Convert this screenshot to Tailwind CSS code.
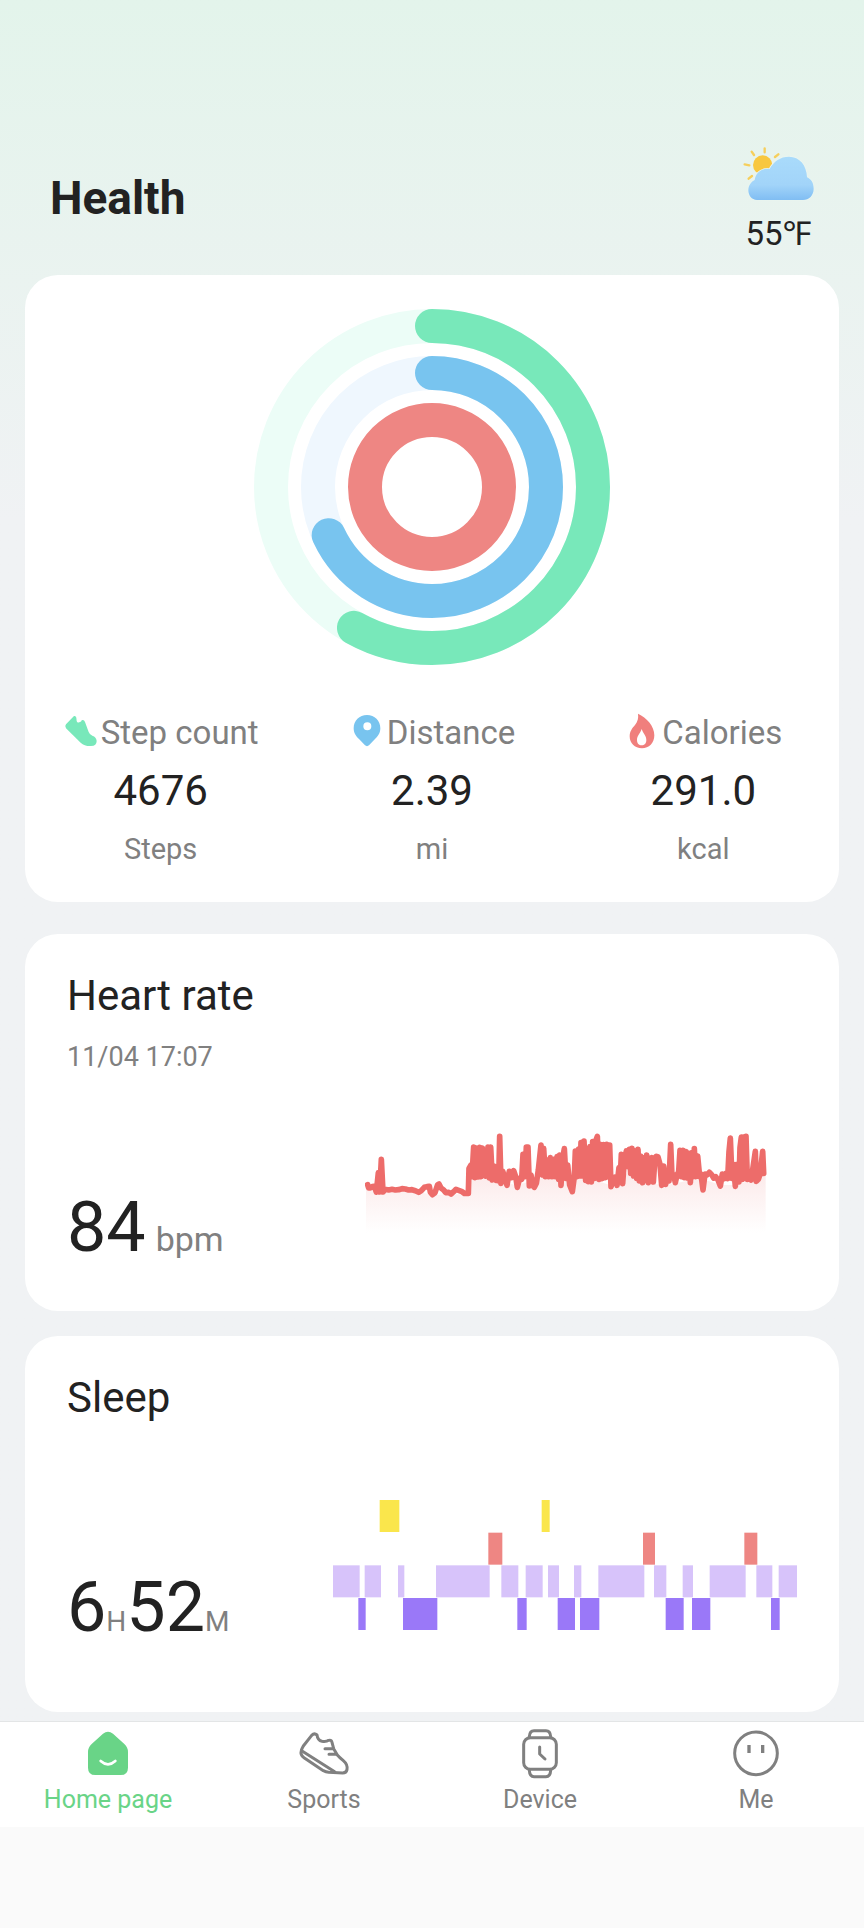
<!DOCTYPE html>
<html lang="en">
<head>
    <meta charset="UTF-8">
    <meta name="viewport" content="width=device-width, initial-scale=1.0">
    <title>Health</title>
    <!-- Tailwind CSS via CDN -->
    <script src="https://cdn.jsdelivr.net/npm/@tailwindcss/browser@4"></script>
</head>
<body class="bg-[#fafafa] min-h-screen font-['Roboto','Noto_Sans',sans-serif] text-[#222222]">
    <div class="bg-[#f0f2f4] bg-linear-to-b from-[#e3f4eb] to-[#f0f2f4] to-[520px] pb-[9px]">
        <header class="flex items-center justify-between pl-[50px] pr-12 pt-[145px] pb-[21px]">
            <h1 class="pb-1 text-[46px] leading-[56px] font-bold">Health</h1>
            <div class="flex flex-col items-center gap-3">
                <svg class="w-[75px] h-[57px]" viewBox="60 45 225 171" aria-hidden="true">
                    <defs>
                        <linearGradient id="cloud" x1="0" y1="0" x2="0" y2="1">
                            <stop offset="0" stop-color="#a9dbfb"/>
                            <stop offset="0.65" stop-color="#a2d4f9"/>
                            <stop offset="1" stop-color="#80bdf3"/>
                        </linearGradient>
                    </defs>
                    <g stroke="#f6cf5c" stroke-width="7" stroke-linecap="round">
                        <path d="M131 55v12M92 65l7 10M172 73l-10 8M71 103l14 3M83 146l10-8"/>
                    </g>
                    <circle cx="125" cy="105" r="29" fill="#f8c73f"/>
                    <path d="M108 210C92 210 82 196 82 181C82 166 91 155 101 150C104 128 122 114 146 117C158 94 178 80 204 80C236 80 257 106 258 142C270 147 278 158 278 176C278 196 264 210 246 210Z" fill="url(#cloud)" stroke="#e9f5f0" stroke-width="5" paint-order="stroke"/>
                </svg>
                <p class="text-[33px] leading-10">55℉</p>
            </div>
        </header>

        <main class="px-[25px]">
            <!-- Activity -->
            <section class="bg-white rounded-[33px] pt-[34px] pb-[35px]">
                <svg class="mx-auto w-[356px] h-[356px]" viewBox="0 0 356 356" role="img" aria-label="Daily activity">
                    <g transform="rotate(-90 178 178)" fill="none" stroke-width="34" stroke-linecap="round">
                        <circle cx="178" cy="178" r="161" stroke="#ecfdf7"/>
                        <circle cx="178" cy="178" r="161" stroke="#78e8ba" pathLength="360" stroke-dasharray="209 360"/>
                        <circle cx="178" cy="178" r="114" stroke="#eff7fe"/>
                        <circle cx="178" cy="178" r="114" stroke="#78c4ef" pathLength="360" stroke-dasharray="245 360"/>
                        <circle cx="178" cy="178" r="67" stroke="#ee8683"/>
                    </g>
                </svg>
                <div class="grid grid-cols-3 mt-12 text-center text-[#808080]">
                    <div>
                        <h2 class="flex justify-center gap-[2px] text-[33px] leading-10">
                            <svg class="w-9 h-10" viewBox="98 69 108 120" aria-hidden="true">
                                <path d="M131 78Q137 77 138 83L139 93Q140 99 147 97Q154 95 154 91Q161 88 164 96L175 126Q178 134 186 137Q198 141 199 153Q199 168 182 168Q163 169 151 158L107 115Q102 109 107 103Z" fill="#78e8ba"/>
                            </svg>
                            Step count
                        </h2>
                        <p class="mt-[14px] text-[42px] leading-12 text-[#222222]">4676</p>
                        <p class="mt-4 text-[29px] leading-9">Steps</p>
                    </div>
                    <div>
                        <h2 class="flex justify-center gap-[2px] text-[33px] leading-10">
                            <svg class="w-9 h-10" viewBox="954 69 108 120" aria-hidden="true">
                                <path fill-rule="evenodd" d="M1008 75C1031 75 1048 92 1048 115C1048 130 1040 140 1032 147L1014 166Q1008 171 1002 166L984 147C976 140 968 130 968 115C968 92 985 75 1008 75ZM1009 97a12 12 0 1 0 0 24a12 12 0 1 0 0-24Z" fill="#78c4ef"/>
                            </svg>
                            Distance
                        </h2>
                        <p class="mt-[14px] text-[42px] leading-12 text-[#222222]">2.39</p>
                        <p class="mt-4 text-[29px] leading-9">mi</p>
                    </div>
                    <div>
                        <h2 class="flex justify-center gap-[2px] text-[33px] leading-10">
                            <svg class="w-9 h-10" viewBox="582 69 108 120" aria-hidden="true">
                                <path fill-rule="evenodd" d="M624 71C650 83 673 108 673 136C673 159 657 175 636 175C614 175 599 159 599 139C599 124 607 114 615 105C623 95 626 84 624 71ZM635 117C631 130 621 137 621 150C621 160 627 166 635 166C643 166 649 160 649 150C649 137 639 130 635 117Z" fill="#f07f7d"/>
                            </svg>
                            Calories
                        </h2>
                        <p class="mt-[14px] text-[42px] leading-12 text-[#222222]">291.0</p>
                        <p class="mt-4 text-[29px] leading-9">kcal</p>
                    </div>
                </div>
            </section>

            <!-- Heart rate -->
            <section class="mt-8 bg-white rounded-[33px] px-[42px] pt-[38px] pb-[44px]">
                <h2 class="text-[42px] leading-12">Heart rate</h2>
                <p class="mt-[21px] text-[27px] leading-8 text-[#808080]">11/04 17:07</p>
                <div class="mt-[57px] flex items-end justify-between">
                    <p class="flex items-baseline gap-[10px]">
                        <span class="text-[70px] leading-20">84</span>
                        <span class="text-[34px] leading-10 text-[#808080]">bpm</span>
                    </p>
                    <svg class="mr-[30px] mb-8 w-[402px] h-[105px]" viewBox="44 60 1206 315" role="img" aria-label="Heart rate today">
                        <defs>
                            <linearGradient id="pulse" x1="0" y1="200" x2="0" y2="368" gradientUnits="userSpaceOnUse">
                                <stop offset="0" stop-color="#fcebeb"/>
                                <stop offset="1" stop-color="#ffffff"/>
                            </linearGradient>
                        </defs>
                        <path d="M47 235L100 245L200 245L250 255L356 252L364 205L400 200L440 215L500 225L590 200L640 205L670 235L680 195L780 225L830 190L880 220L950 225L1050 205L1110 225L1160 225L1246 195V370H47Z" fill="url(#pulse)"/>
                        <polyline fill="none" stroke="#ed6c6a" stroke-width="17" stroke-linejoin="round" stroke-linecap="round" points="52,224 55,234 60,234 66,230 72,229 78,246 84,188 88,246 93,148 98,246 104,238 115,240 125,238 135,240 145,239 155,236 165,237 175,240 185,239 195,242 205,247 213,242 222,232 230,230 237,229 240,246 246,254 254,248 262,224 266,222 272,234 280,240 286,248 295,247 302,252 310,245 317,238 325,241 335,245 342,250 354,250 356,175 362,165 365,200 370,111 374,203 378,114 383,201 388,112 392,200 396,114 400,190 405,198 410,165 413,111 417,204 421,111 426,210 431,168 437,211 441,168 445,213 448,79 452,220 457,184 463,200 470,226 477,184 484,203 490,182 496,200 501,232 508,205 514,208 518,133 524,200 528,111 533,111 537,228 542,195 547,225 552,232 558,220 564,180 572,105 577,195 580,115 585,200 590,150 595,200 600,143 605,200 610,148 615,200 620,140 625,208 628,135 632,226 637,145 642,116 647,205 652,165 658,225 666,245 672,200 675,123 680,200 685,117 689,198 692,98 697,198 701,93 706,211 710,117 714,215 719,110 723,216 727,95 732,205 736,93 741,79 746,208 750,103 755,206 760,104 765,203 769,103 773,200 778,105 782,230 788,210 794,202 800,226 806,173 810,200 813,133 817,221 822,150 828,123 833,170 837,118 841,190 845,115 850,198 854,123 859,205 863,118 867,213 871,138 877,218 882,143 886,210 889,135 894,218 899,200 904,143 909,216 914,143 918,139 923,141 929,163 934,226 940,168 946,223 951,188 956,213 961,103 965,200 970,194 975,218 980,195 985,185 989,121 993,200 998,121 1002,203 1007,125 1011,204 1016,130 1020,218 1025,128 1029,200 1032,116 1036,200 1042,138 1048,200 1052,192 1058,240 1064,192 1070,195 1077,187 1084,194 1090,204 1096,200 1103,210 1110,228 1116,192 1122,206 1127,190 1132,206 1136,125 1140,84 1145,205 1149,163 1155,229 1160,163 1166,216 1169,113 1173,81 1176,208 1180,81 1184,190 1187,79 1191,208 1197,194 1202,210 1208,172 1215,124 1218,214 1224,208 1230,190 1237,124 1240,190"/>
                    </svg>
                </div>
            </section>

            <!-- Sleep -->
            <section class="mt-[25px] bg-white rounded-[33px] px-[42px] pt-[38px] pb-[65px]">
                <h2 class="text-[42px] leading-12">Sleep</h2>
                <div class="mt-[78px] flex items-end justify-between">
                    <p class="flex items-baseline">
                        <span class="text-[70px] leading-20">6</span>
                        <span class="text-[28px] leading-8 text-[#808080]">H</span>
                        <span class="text-[70px] leading-20">52</span>
                        <span class="text-[28px] leading-8 text-[#808080]">M</span>
                    </p>
                    <svg class="mb-[17px] w-[464px] h-[130px]" viewBox="40 60 1392 390" role="img" aria-label="Sleep stages">
                        <!-- awake -->
                        <g fill="#fae64c">
                            <rect x="180" y="60" width="59" height="96"/>
                            <rect x="666" y="60" width="24" height="96"/>
                        </g>
                        <!-- rem -->
                        <g fill="#ee8683">
                            <rect x="506" y="158" width="42" height="96"/>
                            <rect x="970" y="158" width="36" height="96"/>
                            <rect x="1274" y="158" width="39" height="96"/>
                        </g>
                        <!-- light -->
                        <g fill="#d7c3fa">
                            <rect x="40" y="256" width="80" height="96"/>
                            <rect x="135" y="256" width="49" height="96"/>
                            <rect x="235" y="256" width="19" height="96"/>
                            <rect x="349" y="256" width="161" height="96"/>
                            <rect x="545" y="256" width="51" height="96"/>
                            <rect x="618" y="256" width="51" height="96"/>
                            <rect x="685" y="256" width="33" height="96"/>
                            <rect x="763" y="256" width="22" height="96"/>
                            <rect x="836" y="256" width="138" height="96"/>
                            <rect x="1003" y="256" width="37" height="96"/>
                            <rect x="1089" y="256" width="31" height="96"/>
                            <rect x="1170" y="256" width="108" height="96"/>
                            <rect x="1310" y="256" width="48" height="96"/>
                            <rect x="1377" y="256" width="55" height="96"/>
                        </g>
                        <!-- deep -->
                        <g fill="#9a78f8">
                            <rect x="116" y="354" width="22" height="96"/>
                            <rect x="250" y="354" width="103" height="96"/>
                            <rect x="593" y="354" width="28" height="96"/>
                            <rect x="714" y="354" width="52" height="96"/>
                            <rect x="781" y="354" width="58" height="96"/>
                            <rect x="1038" y="354" width="54" height="96"/>
                            <rect x="1117" y="354" width="55" height="96"/>
                            <rect x="1354" y="354" width="26" height="96"/>
                        </g>
                    </svg>
                </div>
            </section>
        </main>
    </div>

    <nav class="grid grid-cols-4 border-t border-[#e3e5e6] bg-white pt-[6px] pb-[11px] text-[25px] leading-8 text-[#808080]">
        <a href="#" class="flex flex-col items-center gap-1 text-[#69d487]" aria-current="page">
            <svg class="w-14 h-[52px]" viewBox="240 84 168 156" aria-hidden="true">
                <path d="M309 101Q324 90 339 101L373 132Q384 142 384 156V203Q384 225 362 225H286Q264 225 264 203V156Q264 142 275 132Z" fill="#69d487"/>
                <path d="M302 183Q324 203 346 183" fill="none" stroke="#fff" stroke-width="8" stroke-linecap="round"/>
            </svg>
            Home page
        </a>
        <a href="#" class="flex flex-col items-center gap-1">
            <svg class="w-14 h-[52px]" viewBox="888 84 168 156" fill="none" stroke="#808080" stroke-width="9" stroke-linecap="round" stroke-linejoin="round" aria-hidden="true">
                <path d="M935 106Q943 98 951 105Q953 121 966 124Q979 126 986 121Q994 119 996 127L1001 146L1012 165Q1018 172 1030 182Q1044 194 1041 209Q1039 219 1028 219L986 217Q978 216 970 212L912 173Q900 165 904 151Q905 147 910 138Z"/>
                <path d="M905 152L1004 215"/>
                <path d="M975 146H1000M987 163H1010"/>
            </svg>
            Sports
        </a>
        <a href="#" class="flex flex-col items-center gap-1">
            <svg class="w-14 h-[52px]" viewBox="240 84 168 156" fill="none" stroke="#808080" stroke-width="9" stroke-linecap="round" stroke-linejoin="round" aria-hidden="true">
                <rect x="275" y="113" width="98" height="95" rx="20"/>
                <path d="M292 110Q293 92 306 92H342Q355 92 356 110M292 211Q293 230 306 230H342Q355 230 356 211"/>
                <path d="M323 141V162L339 177"/>
            </svg>
            Device
        </a>
        <a href="#" class="flex flex-col items-center gap-1">
            <svg class="w-14 h-[52px]" viewBox="888 84 168 156" fill="none" stroke="#808080" stroke-width="9" aria-hidden="true">
                <circle cx="972" cy="160" r="64"/>
                <path d="M951 135V159M992 135V159" stroke-width="10"/>
            </svg>
            Me
        </a>
    </nav>
</body>
</html>
